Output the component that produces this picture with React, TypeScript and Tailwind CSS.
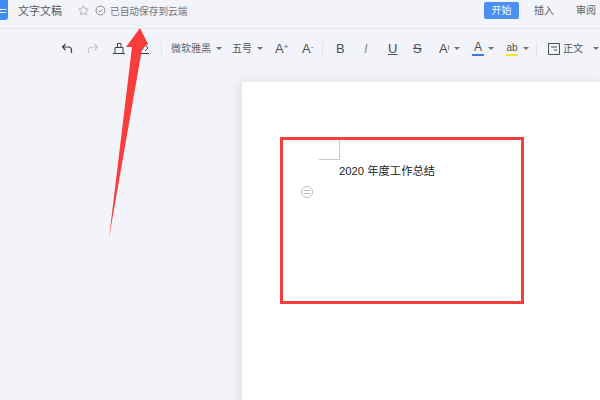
import { Star } from "lucide-react";

const cjk = { fontFamily: '"Liberation Sans", "Noto Sans CJK SC", sans-serif' };

function Caret({ className = "" }: { className?: string }) {
  return <span className={`shrink-0 inline-block w-0 h-0 border-x-[3px] border-x-transparent border-t-[3px] border-t-[#6b7079] ${className}`} />;
}

function Sep({ className = "" }: { className?: string }) {
  return <span className={`shrink-0 w-px h-[13px] bg-[#e0e2e8] ${className}`} />;
}

function Undo({ flip = false, color = "#3c4048", className = "" }: { flip?: boolean; color?: string; className?: string }) {
  return (
    <svg className={`shrink-0 ${className}`} width="12" height="11" viewBox="0 0 12 11" fill="none" stroke={color} strokeWidth="1.2" style={flip ? { transform: "scaleX(-1)" } : undefined}>
      <path d="M4.5 1 1.5 4l3 3M1.8 4h5.7c2 0 3 1.3 3 3v3" />
    </svg>
  );
}

export default function App() {
  return (
    <div className="relative w-[600px] h-[400px] overflow-hidden bg-[#f3f4f9] text-[#50545c]" style={cjk}>
      {/* title bar */}
      <div className="h-[29px] flex items-start border-b border-[#e6e8ee]">
        <div className="w-[8px] h-[20px] bg-[#3f8cf3] rounded-br-[3px] flex flex-col justify-center gap-[2px] pr-[2px] pt-[2px]">
          <span className="h-px bg-white" />
          <span className="h-px bg-white" />
        </div>
        <span className="ml-[10px] mt-[4px] text-[11px] leading-[14px] text-[#53575e]">文字文稿</span>
        <Star className="ml-[16px] mt-[5px] text-[#8b8f97]" size={11} strokeWidth={1.4} />
        <svg className="ml-[6px] mt-[5px]" width="11" height="11" viewBox="0 0 11 11" fill="none" stroke="#8b8f97">
          <circle cx="5.5" cy="5.5" r="4.5" />
          <path d="M3.5 5.5 5 7l2.5-2.5" />
        </svg>
        <span className="ml-[4px] mt-[5px] text-[9.7px] leading-[14px] text-[#72767d]">已自动保存到云端</span>
        <div className="ml-auto flex items-start mt-[2px]">
          <span className="w-[35px] h-[17px] rounded-[2px] bg-[#4a90f2] text-white text-[10px] leading-[17px] text-center">开始</span>
          <span className="ml-[15px] mt-[2px] text-[10px] leading-[14px] text-[#5a5e66]">插入</span>
          <span className="ml-[22px] mt-[2px] mr-[4px] text-[10px] leading-[14px] text-[#5a5e66]">审阅</span>
        </div>
      </div>

      {/* toolbar */}
      <div className="h-[41px] flex items-center pl-[61px] pb-[2px] whitespace-nowrap text-[#4a4e56]">
        <Undo />
        <Undo flip color="#c6c9d0" className="ml-[14px]" />
        <svg className="ml-[14px] shrink-0" width="12" height="11" viewBox="0 0 12 11" fill="none" stroke="#3c4048">
          <path d="M2 10V4.5h8V10M0 10.5h12M4.5 4.5v-4h3.5v4" />
        </svg>
        <svg className="ml-[14px] shrink-0" width="11" height="11" viewBox="0 0 11 11" fill="none" stroke="#3c4048">
          <path d="M3 7 6 2l3 3-3 3M1 10.5h9" />
        </svg>
        <Sep className="ml-[11px]" />
        <span className="ml-[9px] w-[40px] text-[10px] text-[#62666e]">微软雅黑</span>
        <Caret className="ml-[5px]" />
        <span className="ml-[10px] w-[20px] text-[10px] text-[#50545c]">五号</span>
        <Caret className="ml-[5px]" />
        <span className="ml-[12px] w-[14px] text-[13px] leading-none">A<sup className="text-[8px]">+</sup></span>
        <span className="ml-[13px] w-[12px] text-[13px] leading-none">A<sup className="text-[8px]">-</sup></span>
        <Sep className="ml-[8px]" />
        <span className="ml-[13px] w-[9px] text-[13px] leading-none">B</span>
        <span className="ml-[19px] w-[4px] text-[13px] leading-none italic text-[#8b8f97]">I</span>
        <span className="ml-[20px] w-[9px] text-[13px] leading-none underline">U</span>
        <span className="ml-[16px] w-[9px] text-[13px] leading-none line-through">S</span>
        <span className="ml-[17px] w-[12px] text-[13px] leading-none">A<sup className="text-[7px]">i</sup></span>
        <Caret className="ml-[3px]" />
        <span className="ml-[12px] flex flex-col items-center w-[12px] text-[12px] leading-[11px]">
          A<span className="w-full h-[2px] mt-px bg-[#3c78e8]" />
        </span>
        <Caret className="ml-[4px]" />
        <span className="ml-[12px] flex flex-col items-center w-[12px] text-[10px] leading-[11px]">
          ab<span className="w-full h-[2px] mt-px bg-[#f3e61c]" />
        </span>
        <Caret className="ml-[5px]" />
        <Sep className="ml-[7px]" />
        <svg className="ml-[11px] shrink-0" width="12" height="12" viewBox="0 0 12 12" fill="none" stroke="#4a4e56">
          <path d="M.5.5h11v11H.5zM3 4h6M6 7h3" />
        </svg>
        <span className="ml-[3px] w-[20px] text-[10px] text-[#50545c]">正文</span>
        <Caret className="ml-[10px]" />
      </div>

      {/* page */}
      <div className="ml-[242px] mt-[12px] h-[400px] bg-white shadow-[-3px_0_10px_rgba(120,125,140,0.16)] relative pl-[77px] pt-[57px]">
        <div className="w-[21px] h-[21px] border-r border-b border-[#c9c9c9]" />
        <p className="ml-[20px] mt-[3px] text-[11.3px] leading-[16px] text-[#222]">2020 年度工作总结</p>
        <span className="absolute left-[59px] top-[104px] w-[12px] h-[12px] rounded-full border border-[#b8bcc8] flex flex-col items-center justify-center gap-[2px]">
          <span className="w-[6px] h-px bg-[#b8bcc8]" />
          <span className="w-[6px] h-px bg-[#b8bcc8]" />
        </span>
      </div>

      {/* annotations */}
      <div className="absolute left-[280px] top-[137px] w-[244px] h-[167px] border-[3px] border-[#f93c3c]" />
      <svg className="absolute left-0 top-0 pointer-events-none" width="600" height="400">
        <polygon points="140,28 148,44 142,49 109,238 132,47 126,47" fill="#f93c3c" />
      </svg>
    </div>
  );
}
